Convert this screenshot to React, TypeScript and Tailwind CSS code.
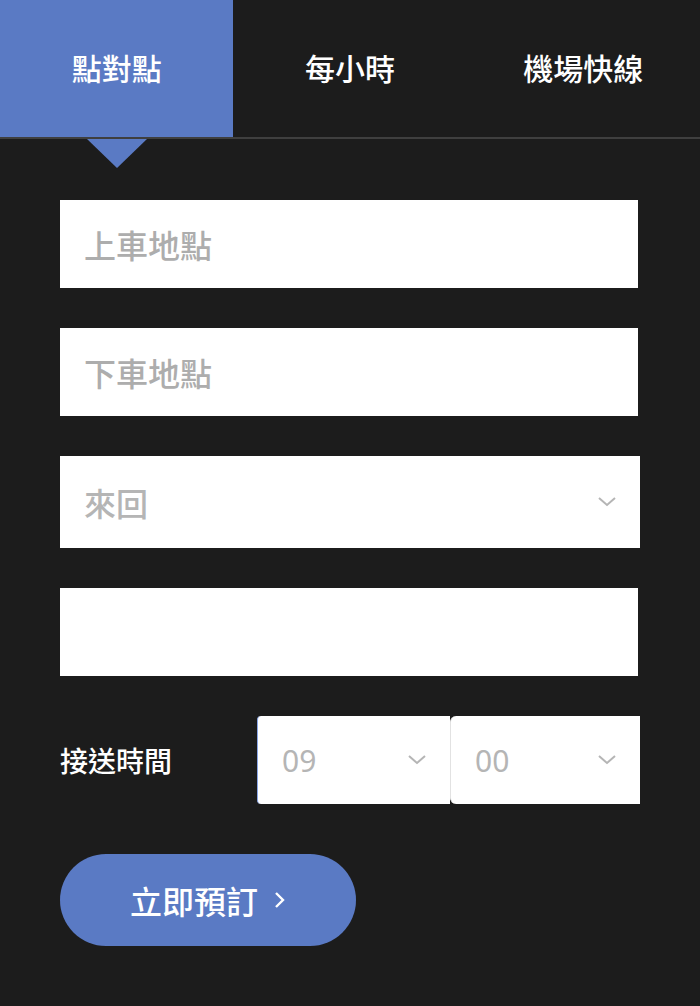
import * as React from 'react';

const font = { fontFamily: '"Noto Sans CJK TC", "Noto Sans", sans-serif' };

function Chevron({ className = '' }: { className?: string }) {
  return (
    <svg width="18" height="10" viewBox="0 0 18 10" fill="none" className={className}>
      <path d="M1 1l8 7 8-7" stroke="#b5b5b5" strokeWidth="2" />
    </svg>
  );
}

export default function App() {
  const tabs = ['點對點', '每小時', '機場快線'];
  const [active, setActive] = React.useState(0);

  return (
    <div className="min-h-[1006px] w-[700px] bg-[#1c1c1c] text-white" style={font}>
      <div className="grid grid-cols-3 h-[139px] border-b-2 border-[#3f3f3f]">
        {tabs.map((t, i) => (
          <button
            key={t}
            onClick={() => setActive(i)}
            className={`relative flex items-center justify-center pb-[2px] text-[30px] font-medium ${
              i === active ? 'bg-[#5a7ac4]' : ''
            }`}
          >
            {t}
            {i === active && (
              <span className="absolute left-1/2 top-full -translate-x-1/2 mt-[2px] w-0 h-0 border-l-[30px] border-r-[30px] border-t-[29px] border-l-transparent border-r-transparent border-t-[#5a7ac4]" />
            )}
          </button>
        ))}
      </div>

      <div className="px-[60px] pt-[61px] flex flex-col">
        <input
          placeholder="上車地點"
          className="h-[88px] w-[578px] bg-white px-6 text-[32px] font-medium text-[#333] placeholder:text-[#adadad] outline-none"
        />
        <input
          placeholder="下車地點"
          className="mt-10 h-[88px] w-[578px] bg-white px-6 text-[32px] font-medium text-[#333] placeholder:text-[#adadad] outline-none"
        />
        <div className="mt-10 h-[92px] w-[580px] bg-white flex items-center justify-between pl-6 pr-6">
          <span className="text-[32px] font-medium text-[#b5b5b5]">來回</span>
          <Chevron />
        </div>
        <input className="mt-10 h-[88px] w-[578px] bg-white px-6 text-[32px] outline-none" />

        <div className="mt-10 flex items-center h-[88px]">
          <span className="w-[197px] text-[28px] font-medium">接送時間</span>
          <div className="flex h-[88px]">
            <div className="w-[193px] bg-white rounded-l-[4px] border-l border-[#8aa6e6] flex items-center justify-between pl-6 pr-6">
              <span className="text-[30px] text-[#b5b5b5]" style={{ fontFamily: '"Noto Sans", sans-serif' }}>09</span>
              <Chevron />
            </div>
            <div className="w-[190px] bg-white rounded-l-[6px] border-l border-[#e2e2e2] flex items-center justify-between pl-6 pr-6">
              <span className="text-[30px] text-[#b5b5b5]" style={{ fontFamily: '"Noto Sans", sans-serif' }}>00</span>
              <Chevron />
            </div>
          </div>
        </div>

        <button className="mt-[50px] h-[92px] w-[296px] rounded-full bg-[#5a7ac4] flex items-center justify-center gap-4 text-[32px] font-medium">
          立即預訂
          <svg width="12" height="20" viewBox="0 0 12 20" fill="none">
            <path d="M2 3l7 7-7 7" stroke="white" strokeWidth="2.4" />
          </svg>
        </button>
      </div>
    </div>
  );
}
